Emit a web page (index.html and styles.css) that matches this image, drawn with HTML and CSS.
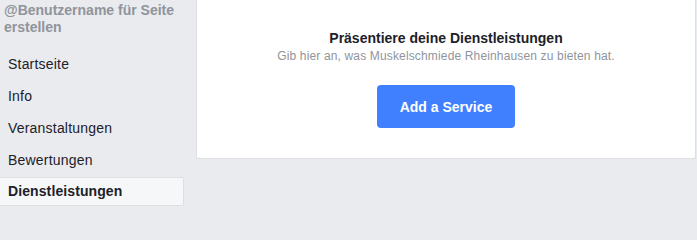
FILE: index.html
```html
<!DOCTYPE html>
<html lang="de">
<head>
<meta charset="utf-8">
<link rel="stylesheet" href="styles.css">
</head>
<body>
<div class="page">
  <aside class="sidebar">
    <div class="handle">@Benutzername für Seite erstellen</div>
    <nav class="nav">
      <div class="nav-item">Startseite</div>
      <div class="nav-item">Info</div>
      <div class="nav-item">Veranstaltungen</div>
      <div class="nav-item">Bewertungen</div>
      <div class="nav-item active">Dienstleistungen</div>
    </nav>
  </aside>
  <main class="card">
    <h2 class="title">Präsentiere deine Dienstleistungen</h2>
    <p class="subtitle">Gib hier an, was Muskelschmiede Rheinhausen zu bieten hat.</p>
    <button class="btn">Add a Service</button>
  </main>
</div>
</body>
</html>
```

FILE: styles.css
```css
html, body {
  margin: 0;
  padding: 0;
  background: #e9ebee;
  font-family: "Liberation Sans", Arial, sans-serif;
  color: #1d2129;
}

.page {
  display: flex;
  gap: 12px;
  padding-right: 1px;
  height: 213px;
}

.sidebar {
  width: 184px;
  flex: none;
}

.handle {
  margin-top: 2px;
  padding-left: 4px;
  font-size: 14px;
  font-weight: bold;
  line-height: 17px;
  color: #90949c;
}

.nav {
  margin-top: 13px;
  display: flex;
  flex-direction: column;
  gap: 3px;
}

.nav-item {
  height: 29px;
  line-height: 29px;
  padding-left: 8px;
  font-size: 14px;
  letter-spacing: 0.2px;
  color: #1d2129;
  box-sizing: border-box;
  border: 1px solid transparent;
  border-left: 0;
}

.nav-item.active {
  background: #f6f7f9;
  border-color: #dddfe2;
  border-radius: 0 2px 2px 0;
  font-weight: bold;
  letter-spacing: 0.1px;
  line-height: 27px;
}

.card {
  flex: 1;
  height: 159px;
  box-sizing: border-box;
  background: #fff;
  border: 1px solid #dddfe2;
  border-top: 0;
  border-radius: 0 0 3px 3px;
  display: flex;
  flex-direction: column;
  align-items: center;
  padding-top: 29px;
}

.title {
  margin: 0;
  font-size: 14px;
  font-weight: bold;
  line-height: 18px;
  color: #1d2129;
}

.subtitle {
  margin: 1px 0 0;
  font-size: 12px;
  line-height: 16px;
  letter-spacing: 0.15px;
  color: #90949c;
}

.btn {
  margin-top: 21px;
  width: 138px;
  height: 43px;
  border: 0;
  border-radius: 4px;
  background: #4080ff;
  color: #fff;
  font-family: "Liberation Sans", Arial, sans-serif;
  font-size: 14px;
  font-weight: bold;
  padding: 0;
}
```
